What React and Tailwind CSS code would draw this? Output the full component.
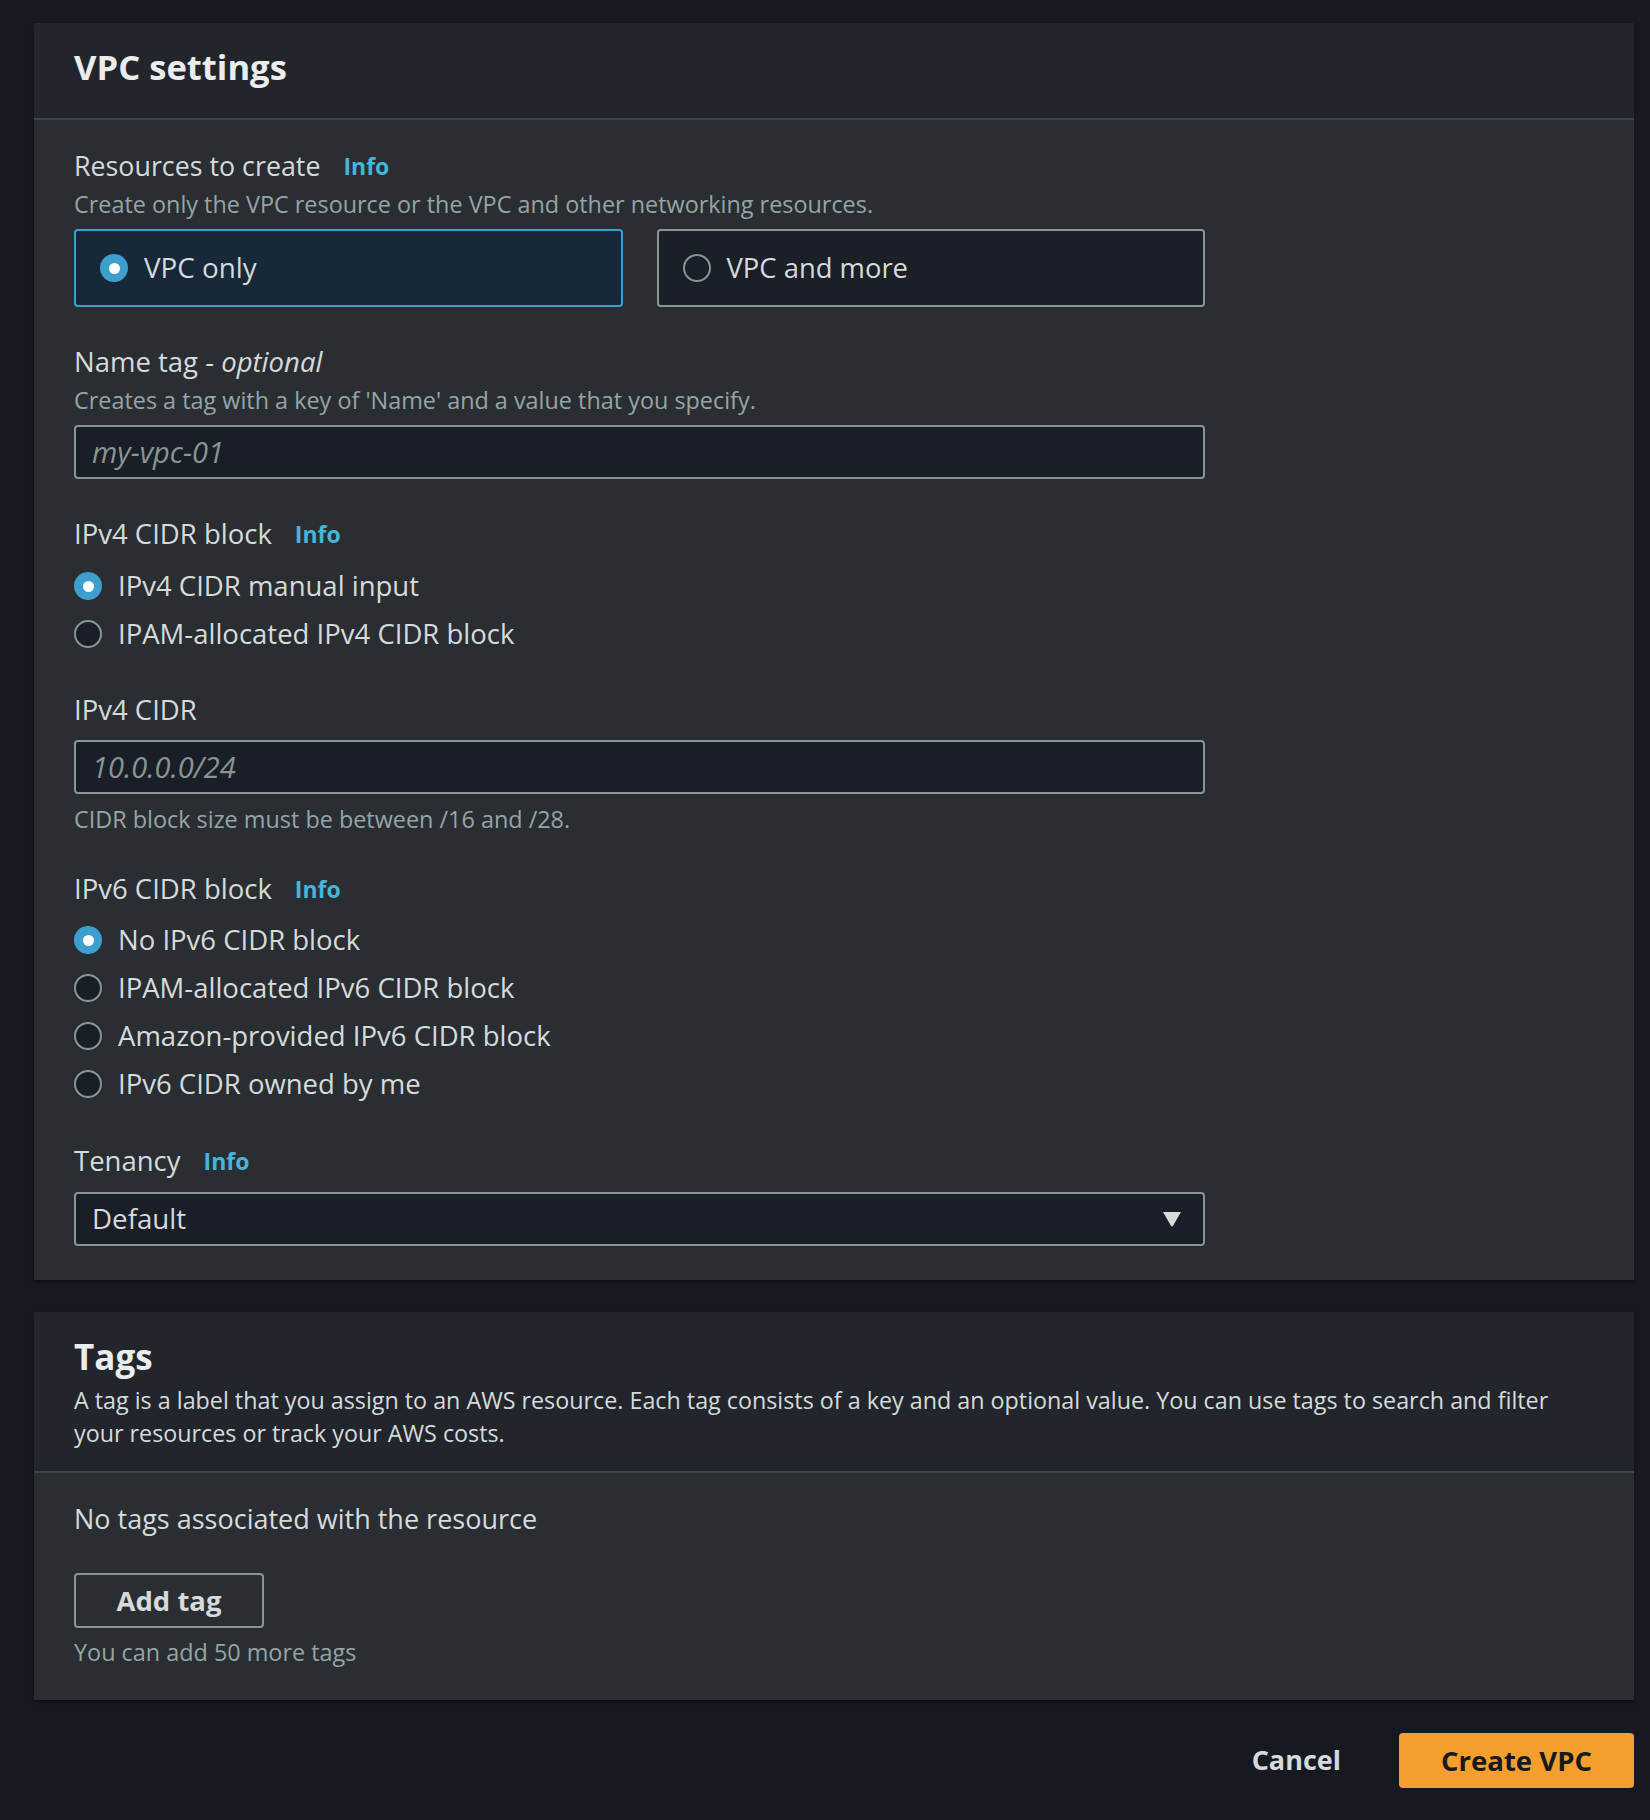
import React from "react";

function Radio({ checked }) {
  if (checked) {
    return (
      <span className="flex h-[28px] w-[28px] shrink-0 items-center justify-center rounded-full bg-[#3d9fcd]">
        <span className="h-[11px] w-[11px] rounded-full bg-white" />
      </span>
    );
  }
  return <span className="h-[28px] w-[28px] shrink-0 rounded-full border-2 border-[#879596] bg-[#1a1f27]" />;
}

function Label({ children, info, className = "" }) {
  return (
    <div className={"flex items-center leading-[34px] text-[#d5dbdb] " + (className.includes("text-[") ? "" : "text-[27.5px] ") + className}>
      <span>{children}</span>
      {info && <span className="ml-[23px] text-[23px] font-bold text-[#44b6d9]">Info</span>}
    </div>
  );
}

function Desc({ children, className = "" }) {
  return <div className={"text-[23.4px] leading-[30px] text-[#95a5a6] " + className}>{children}</div>;
}

function RadioRow({ checked, children }) {
  return (
    <div className="flex h-[48px] items-center gap-[16px]">
      <Radio checked={checked} />
      <span className="text-[27.5px] leading-[34px] text-[#d5dbdb]">{children}</span>
    </div>
  );
}

function Input({ placeholder, className = "" }) {
  return (
    <div
      className={
        "flex h-[54px] w-[1131px] items-center rounded-[4px] border-2 border-[#879596] bg-[#1a1f27] pl-[16px] " +
        className
      }
    >
      <span className="text-[29px] italic text-[#879596]">{placeholder}</span>
    </div>
  );
}

export default function App() {
  return (
    <div className="min-h-[1820px] bg-[#16191f] pt-[23px] pl-[34px] pr-[16px] pb-[31px] font-['Open_Sans',sans-serif]">
      {/* VPC settings */}
      <section className="bg-[#2a2e33] shadow-[0_2px_3px_rgba(0,0,0,0.45)]">
        <div className="h-[97px] border-b-2 border-[#3f444c] bg-[#22252c] px-[40px] pt-[24px]">
          <h2 className="text-[34.6px] font-bold leading-[40px] text-[#eaeded]">VPC settings</h2>
        </div>
        <div className="px-[40px] pt-[29px] pb-[34px]">
          <Label info className="text-[26.8px]">Resources to create</Label>
          <Desc className="mt-[6px]">Create only the VPC resource or the VPC and other networking resources.</Desc>
          <div className="mt-[10px] flex w-[1131px] gap-[34px]">
            <div className="flex h-[78px] flex-1 items-center gap-[16px] rounded-[4px] border-2 border-[#3d9fcd] bg-[#172839] px-[24px]">
              <Radio checked />
              <span className="text-[27.8px] text-[#d5dbdb]">VPC only</span>
            </div>
            <div className="flex h-[78px] flex-1 items-center gap-[16px] rounded-[4px] border-2 border-[#879596] bg-[#1b1f27] px-[24px]">
              <Radio />
              <span className="text-[27.4px] text-[#d5dbdb]">VPC and more</span>
            </div>
          </div>

          <Label className="mt-[38px]">
            Name tag -&nbsp;<i>optional</i>
          </Label>
          <Desc className="mt-[6px]">Creates a tag with a key of 'Name' and a value that you specify.</Desc>
          <Input className="mt-[10px]" placeholder="my-vpc-01" />

          <Label info className="mt-[38px]">IPv4 CIDR block</Label>
          <div className="mt-[11px]">
            <RadioRow checked>IPv4 CIDR manual input</RadioRow>
            <RadioRow>IPAM-allocated IPv4 CIDR block</RadioRow>
          </div>

          <Label className="mt-[35px]">IPv4 CIDR</Label>
          <Input className="mt-[13px]" placeholder="10.0.0.0/24" />
          <Desc className="mt-[10px]">CIDR block size must be between /16 and /28.</Desc>

          <Label info className="mt-[38px]">IPv6 CIDR block</Label>
          <div className="mt-[10px]">
            <RadioRow checked>No IPv6 CIDR block</RadioRow>
            <RadioRow>IPAM-allocated IPv6 CIDR block</RadioRow>
            <RadioRow>Amazon-provided IPv6 CIDR block</RadioRow>
            <RadioRow>IPv6 CIDR owned by me</RadioRow>
          </div>

          <Label info className="mt-[36px]">Tenancy</Label>
          <div className="mt-[14px] flex h-[54px] w-[1131px] items-center justify-between rounded-[4px] border-2 border-[#879596] bg-[#1a1f27] pl-[16px] pr-[21px]">
            <span className="text-[27.7px] text-[#d5dbdb]">Default</span>
            <svg width="20" height="16" viewBox="0 0 20 16">
              <path d="M1 1 H19 L11.2 14.6 Q10 16.4 8.8 14.6 Z" fill="#d5dbdb" />
            </svg>
          </div>
        </div>
      </section>

      {/* Tags */}
      <section className="mt-[32px] bg-[#2a2e33] shadow-[0_2px_3px_rgba(0,0,0,0.45)]">
        <div className="border-b-2 border-[#3f444c] bg-[#22252c] pl-[40px] pr-[60px] pt-[25px] pb-[22px]">
          <h2 className="text-[35px] font-bold leading-[40px] text-[#eaeded]">Tags</h2>
          <p className="mt-[7px] text-[23.3px] leading-[32.5px] text-[#d5dbdb]">
            A tag is a label that you assign to an AWS resource. Each tag consists of a key and an optional value. You can use tags to search and filter your resources or track your AWS costs.
          </p>
        </div>
        <div className="px-[40px] pt-[29px] pb-[33px]">
          <div className="text-[27px] leading-[34px] text-[#d5dbdb]">No tags associated with the resource</div>
          <button className="mt-[37px] flex h-[55px] w-[190px] items-center justify-center rounded-[4px] border-2 border-[#879596] text-[27.5px] font-bold text-[#d5dbdb]">
            Add tag
          </button>
          <Desc className="mt-[9px]">You can add 50 more tags</Desc>
        </div>
      </section>

      {/* Footer */}
      <div className="mt-[33px] flex items-center justify-end gap-[58px]">
        <button className="text-[27px] font-bold text-[#d5dbdb]">Cancel</button>
        <button className="flex h-[55px] w-[235px] items-center justify-center rounded-[4px] bg-[#f49e2e] text-[27.5px] font-bold text-[#16191f]">
          Create VPC
        </button>
      </div>
    </div>
  );
}
